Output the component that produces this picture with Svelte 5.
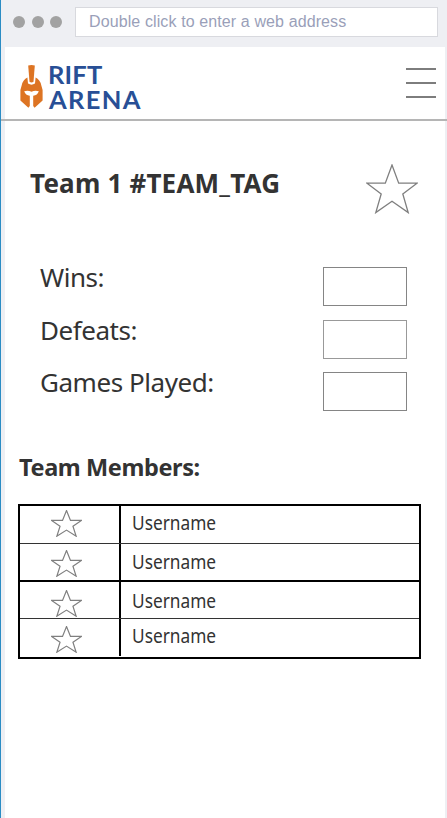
<script>
  const stats = ['Wins:', 'Defeats:', 'Games Played:'];
  const members = ['Username', 'Username', 'Username', 'Username'];
</script>

{#snippet star()}
  <svg class="star" viewBox="0 0 52 50" preserveAspectRatio="none" aria-hidden="true">
    <path d="M26 1 L32.7 19.2 H51 L36.8 30 L42.2 48.6 L26 37.2 L9.8 48.6 L15.2 30 L1 19.2 H19.3 Z" />
  </svg>
{/snippet}

<div class="browser">
  <div class="chrome">
    <div class="dots"><i></i><i></i><i></i></div>
    <div class="address"><span>Double click to enter a web address</span></div>
  </div>

  <div class="page">
    <header>
      <div class="logo">
        <svg class="helmet" viewBox="0 0 23 43" aria-hidden="true">
          <path d="M8.2 0.4 Q11.5 -0.4 14.8 0.4 L13.5 16.8 Q11.5 18.2 9.5 16.8 Z" />
          <path d="M7.4 12.5 L8 18.6 Q11.5 20.8 15 18.6 L15.6 12.5 Q20 14.6 21.2 20 L22.6 25 V35.5 L14.6 42.7 L13.2 41 V30.8 Q17.5 30.2 18.8 26.2 Q15 24.9 11.5 26.8 Q8 24.9 4.2 26.2 Q5.5 30.2 9.8 30.8 V41 L8.4 42.7 L0.4 35.5 V25 L1.8 20 Q3 14.6 7.4 12.5 Z" />
        </svg>
        <div class="brand"><span class="rift">RIFT</span><span class="arena">ARENA</span></div>
      </div>
      <div class="menu"><i></i><i></i><i></i></div>
    </header>

    <section class="title">
      <h1>Team 1 #TEAM_TAG</h1>
      {@render star()}
    </section>

    <section class="stats">
      {#each stats as label, i}
        <div class="stat">
          <span>{label}</span>
          <div class="box" class:soft={i === 1}></div>
        </div>
      {/each}
    </section>

    <h2>Team Members:</h2>
    <div class="members">
      {#each members as name, i}
        <div class="member m{i}">
          <div class="fav">{@render star()}</div>
          <div class="name">{name}</div>
        </div>
      {/each}
    </div>
  </div>
</div>

<style>
  .browser {
    box-sizing: border-box;
    width: 447px;
    height: 818px;
    overflow: hidden;
    background: #eeeff3;
    border-left: 1px solid #2b8cc4;
    display: flex;
    flex-direction: column;
    font-family: 'Noto Sans', 'Open Sans', sans-serif;
    color: #333;
  }
  .chrome {
    height: 47px;
    flex: none;
    display: flex;
    box-sizing: border-box;
    padding: 7px 0 0 12px;
  }
  .dots { display: flex; gap: 6.5px; padding-top: 9px; width: 62px; }
  .dots i { width: 12px; height: 12px; border-radius: 50%; background: #a2a2a2; }
  .address {
    box-sizing: border-box;
    width: 363px;
    height: 30px;
    border: 1px solid #d8d9de;
    background: #fff;
    padding-left: 13px;
    font: 16px/27px 'Liberation Sans', Arial, sans-serif;
    letter-spacing: 0.11px;
    color: #9a9fb9;
    white-space: nowrap;
  }
  .page {
    flex: 1;
    margin: 0 2px 0 4px;
    background: #fff;
  }
  header {
    box-sizing: border-box;
    height: 74px;
    margin: 0 -2px 0 -4px;
    padding: 0 11px 0 19px;
    border-bottom: 2px solid #b5b5b5;
    display: flex;
    justify-content: space-between;
  }
  .logo { display: flex; padding-top: 18px; }
  .helmet { width: 23px; height: 43px; fill: #dd7423; }
  .brand {
    display: flex;
    flex-direction: column;
    margin: -3px 0 0 5px;
    font: 700 25.5px/25px Lato, sans-serif;
    color: #284f96;
  }
  .rift { letter-spacing: 0.2px; }
  .arena { letter-spacing: 1.35px; margin-left: 1px; }
  .menu { display: flex; flex-direction: column; gap: 12px; padding-top: 21px; }
  .menu i { width: 30px; height: 2px; background: #7d7d7d; }
  .title {
    display: flex;
    justify-content: space-between;
    height: 125px;
    padding: 0 27px 0 25px;
  }
  .star { fill: none; stroke: #7f7f7f; stroke-width: 1.3; display: block; }
  .title .star { width: 52px; height: 50px; margin-top: 43px; }
  h1, h2 { margin: 0; font-weight: 700; white-space: nowrap; }
  h1 { font-size: 26px; line-height: 36px; margin-top: 44px; letter-spacing: 0.2px; }
  .stats { padding: 21px 38px 0 35px; }
  .stat {
    height: 52.5px;
    display: flex;
    justify-content: space-between;
    font-size: 26px;
    line-height: 36px;
    letter-spacing: -0.45px;
    white-space: nowrap;
  }
  .stat span { margin-top: -8px; }
  .box { box-sizing: border-box; width: 84px; height: 39px; border: 1px solid #858585; }
  .box.soft { border-color: #999; }
  h2 {
    font-size: 23.5px;
    line-height: 32px;
    height: 32px;
    margin: 26px 0 0 14px;
    letter-spacing: -0.4px;
  }
  .members {
    box-sizing: border-box;
    width: 403px;
    margin: 21px 0 0 13px;
    border: 2px solid #000;
  }
  .member { display: flex; box-sizing: border-box; border-bottom: 1px solid #333; }
  .m0 { height: 38px; }
  .m1 { height: 38px; border-bottom: 2px solid #000; }
  .m2 { height: 37px; }
  .m3 { height: 38px; border-bottom: 0; }
  .fav { box-sizing: border-box; width: 101px; border-right: 2px solid #000; padding: 4px 0 0 31px; }
  .fav .star { width: 31px; height: 27px; stroke-width: 2; }
  .m1 .fav { padding-top: 6px; }
  .m2 .fav { padding-top: 8px; }
  .m3 .fav { padding-top: 7px; height: 37px; }
  .name {
    margin-left: 11px;
    font-size: 19px;
    line-height: 35px;
    transform: scaleX(0.91);
    transform-origin: left;
  }
  .m1 .name { padding-top: 1px; line-height: 34px; }
  .m2 .name { padding-top: 2px; line-height: 34px; }
</style>
